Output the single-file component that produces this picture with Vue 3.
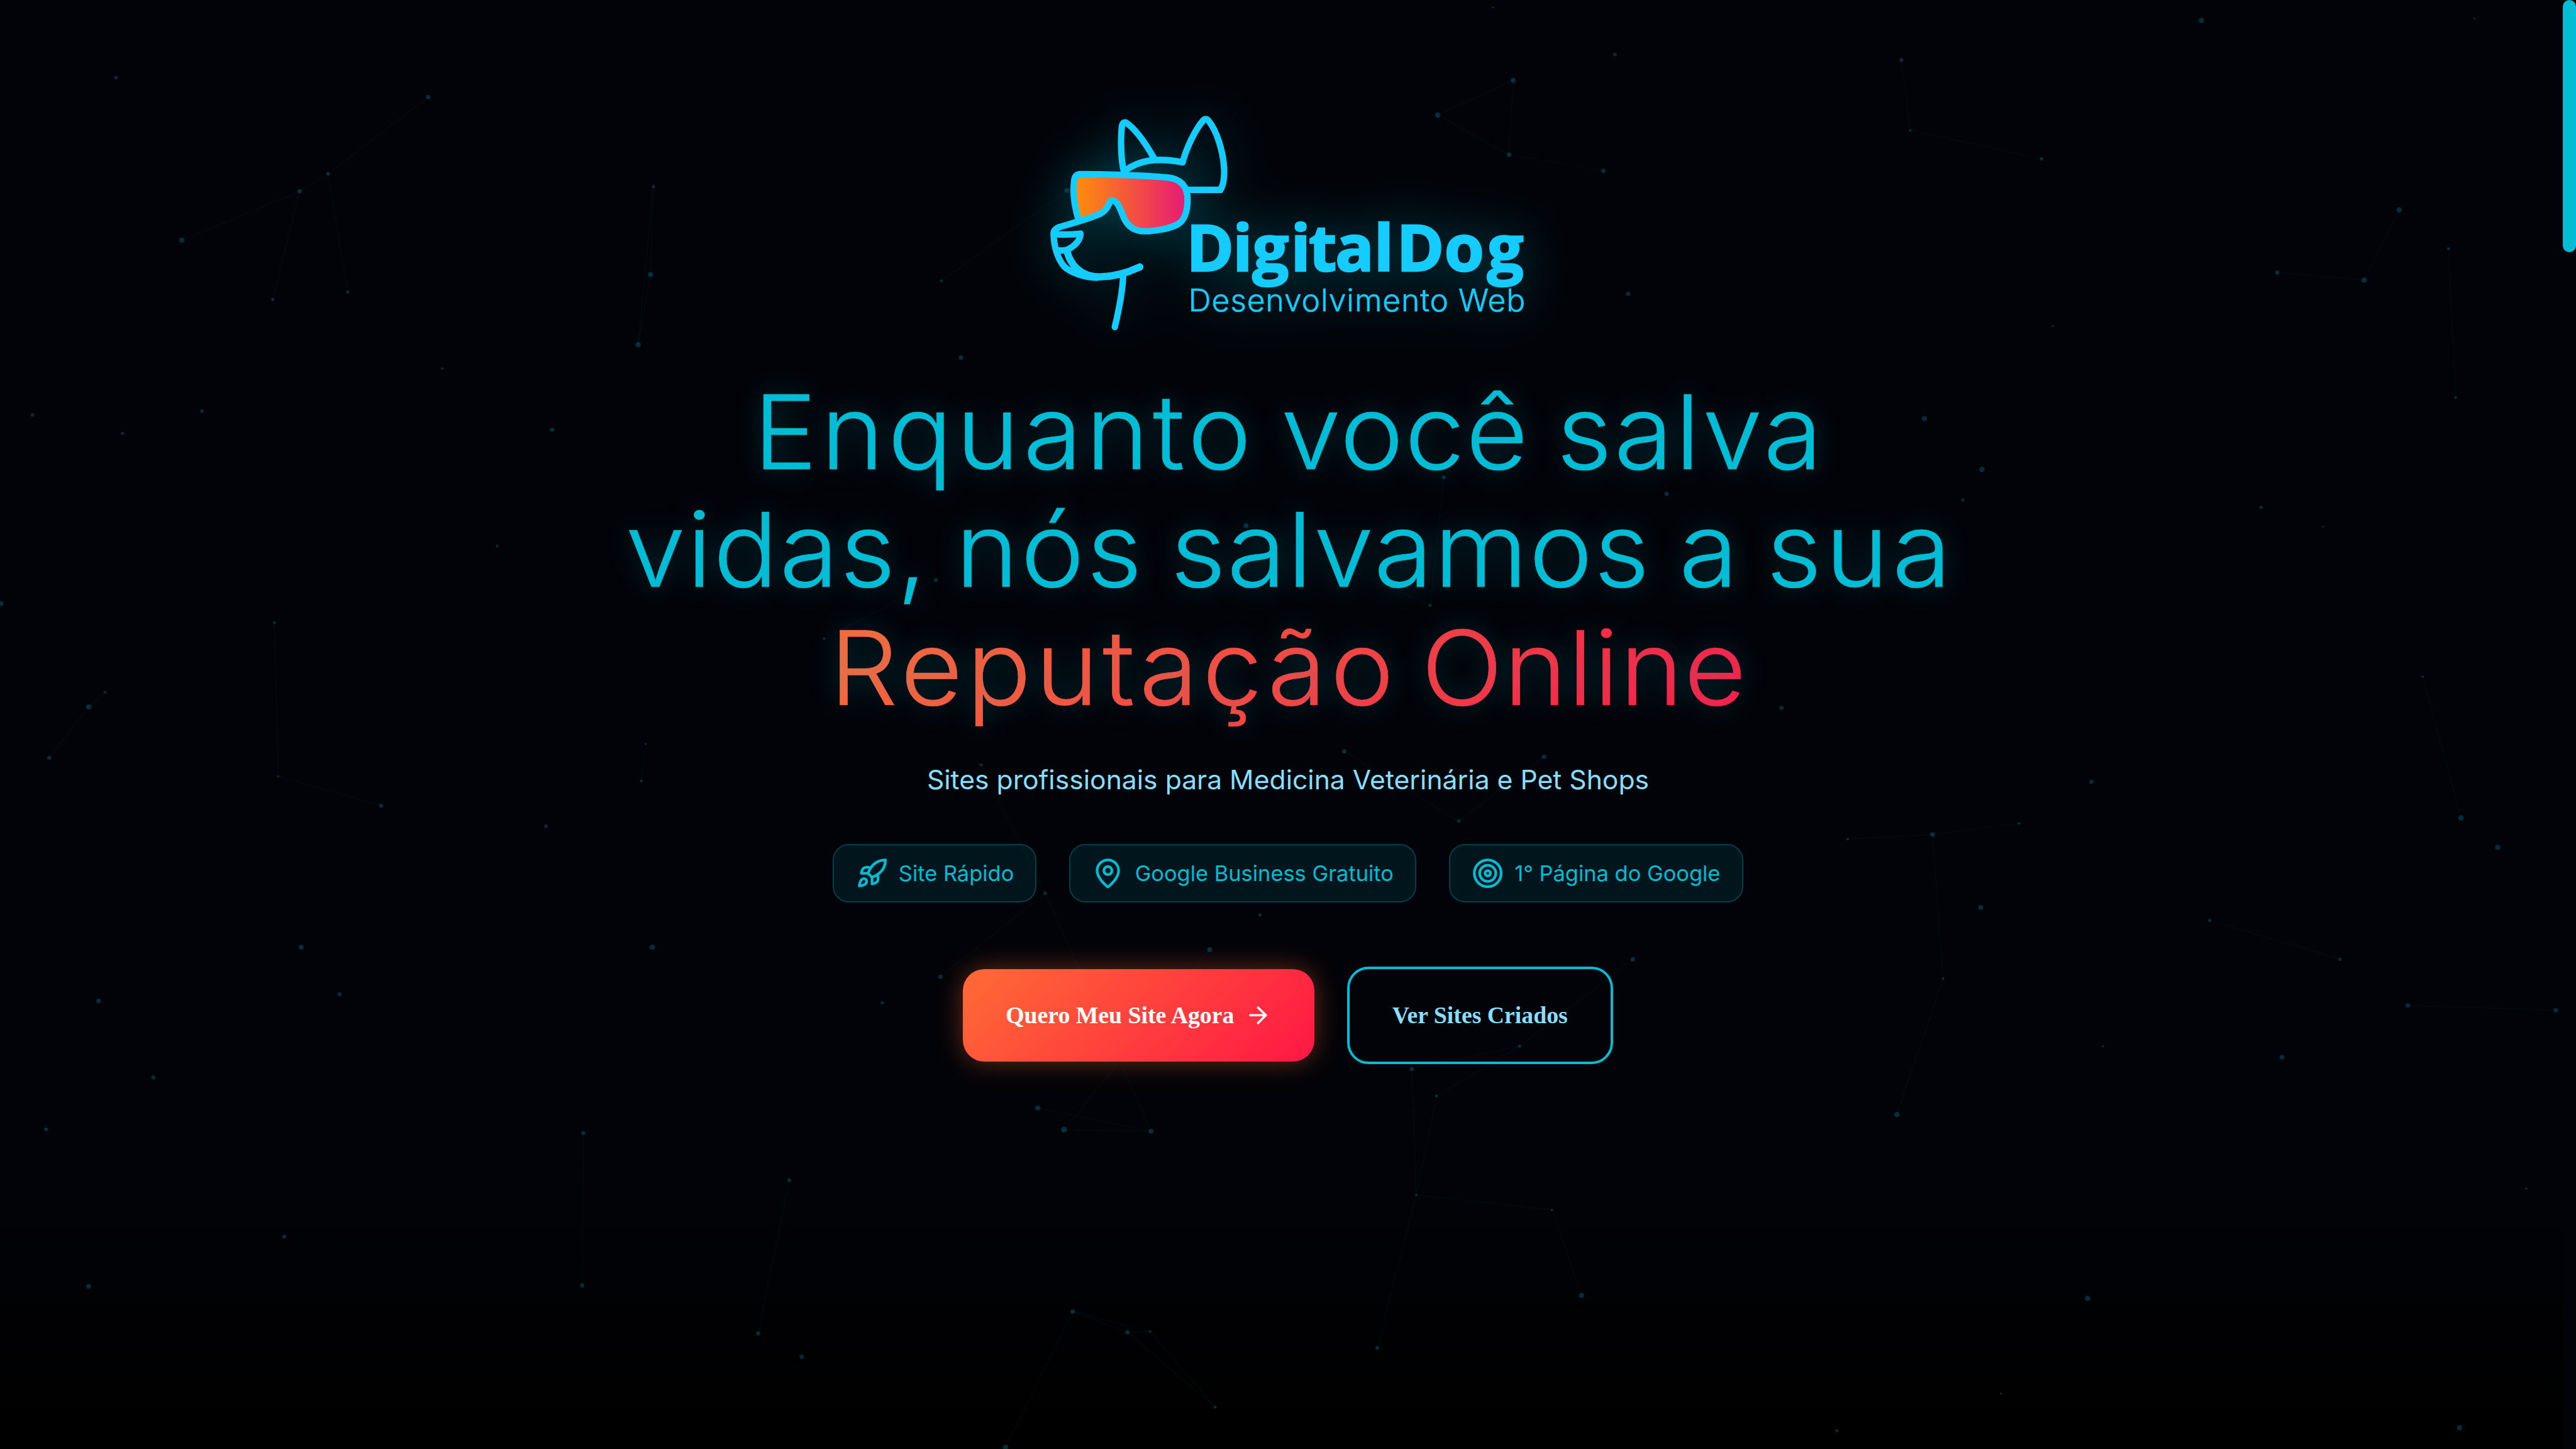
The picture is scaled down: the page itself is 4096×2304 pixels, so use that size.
<script setup>
const lines = [
  {
    indent: 97.7,
    accent: false,
    words: [
      { text: 'Enquanto', gap: 0, spacing: 2.65 },
      { text: 'você', gap: 18.7, spacing: 0.8 },
      { text: 'salva', gap: 19.6, spacing: 1.45 },
    ],
  },
  {
    indent: 6.2,
    accent: false,
    words: [
      { text: 'vidas,', gap: 0, spacing: 1.04 },
      { text: 'nós', gap: 19.1, spacing: 1.6 },
      { text: 'salvamos', gap: 18.7, spacing: 0.86 },
      { text: 'a', gap: 20.4, spacing: 0 },
      { text: 'sua', gap: 20.3, spacing: 2.55 },
    ],
  },
  {
    indent: 152.5,
    accent: true,
    words: [
      { text: 'Reputação', gap: 0, spacing: 2.85 },
      { text: 'Online', gap: 16.7, spacing: 0.66 },
    ],
  },
]

// x, y, radius
const dots = [
  [86.5, 57.9, 1.3], [319.2, 72.3, 1.6], [244.5, 129.5, 1.4], [223.3, 142.6, 1.6], [135.5, 179.1, 2],
  [203.3, 223.2, 1.2], [259.2, 217.7, 1.2], [487, 139.1, 1.2], [484.9, 204.6, 2], [475.6, 256.9, 2],
  [329.8, 274.8, 0.9], [24.1, 309.3, 1.3], [91.4, 323, 1.2], [150.6, 306.5, 1.3], [411.5, 320.3, 1.6],
  [370.6, 407.1, 1], [0.8, 449.8, 1.8], [204.5, 464.2, 1.1], [66.1, 526.9, 2], [78.4, 515.9, 1],
  [36.7, 564.8, 1.5], [207.4, 578.6, 0.8], [284.1, 600.6, 1.5], [407, 615.8, 1.3], [481.3, 554.5, 0.8],
  [478, 582, 1.1], [224.5, 706, 1.8], [486.2, 706, 1.9], [253.1, 741.1, 1.5], [73.5, 746, 1.7],
  [114.3, 803.1, 1.5], [34.3, 841.7, 1.5], [434.7, 844.5, 1.5], [433.9, 958.1, 1.6], [211.9, 921.6, 1.5],
  [66.1, 958.8, 1.8], [588.2, 879.6, 1.4], [565, 993.9, 1.6], [597.6, 1011.2, 1.6], [614.3, 476, 1],
  [1640.8, 15.2, 2], [1844.5, 13.8, 0.8], [1417.2, 44.8, 1.4], [1423.7, 97.1, 1], [1521.7, 118.5, 1.3],
  [1788.2, 156.4, 2], [1825, 185.3, 1.1], [1697.2, 203.2, 1.6], [1762.1, 208.7, 1.9], [1530.2, 243.1, 0.8],
  [1830.3, 296.2, 1], [1434.3, 312, 1.9], [1477.2, 349.9, 2], [1462.9, 372.6, 1.2], [1685.3, 378.2, 1.2],
  [1731.5, 392.6, 0.7], [1805.8, 504.2, 0.9], [1327.8, 527.6, 1.6], [1558.8, 582.7, 1.6], [1834.3, 609.6, 2],
  [1861.7, 631.6, 1.9], [1440.4, 622, 1.7], [1504.9, 613.7, 1], [1377.1, 625.4, 1], [1476.3, 676.4, 1.8],
  [1647, 686, 1.2], [1744.1, 715, 1.2], [1794.7, 749.4, 1.6], [1905, 752.9, 1.6], [1448.2, 729.4, 1],
  [1700.9, 788, 1.8], [1567.4, 779.7, 0.8], [1413.9, 830.7, 2], [1882.9, 885.8, 0.8], [1556, 967.8, 2],
  [1491.4, 1038.7, 0.8], [1369, 1066.3, 1.2], [1833.1, 1064.2, 2], [773.5, 825.8, 1.9], [793.1, 842, 2.2],
  [858, 843.2, 1.8], [1052.3, 796.7, 1.6], [1070.7, 816.9, 1.1], [1132.7, 779.7, 1.2], [1055.5, 890.6, 0.8],
  [1156.8, 901.8, 0.9], [1178.8, 965.5, 1.9], [799.6, 977.5, 1.7], [840.4, 993.1, 1.6], [857.2, 992.5, 1],
  [1026.6, 1004.7, 1.4], [905.7, 1048.7, 1.1], [749.4, 1078.8, 2], [1113, 5.5, 0.8], [1203.7, 40.6, 1.3],
  [1127.8, 59.9, 1.9], [1071.5, 85.8, 2], [1124.8, 115.3, 1.7], [1195.1, 127.4, 1.6], [1213.5, 219, 1.6],
  [701.6, 209.4, 1.1], [716.3, 266.6, 1.7], [795.2, 141.9, 1.8], [1076.1, 355.8, 1.4], [1242.2, 368.2, 1.6],
  [928.7, 391.7, 1.8], [697.6, 432.3, 1.5], [1065.9, 451.2, 1.2], [731.3, 570, 1.2], [1001.9, 560, 1.6],
  [1150.9, 564, 1.7], [1087.3, 612, 1.3], [779, 665.8, 1.3], [939.2, 682, 1.2], [901.7, 707.8, 1.9],
  [701, 728, 1.6], [1217, 715, 1.7], [657.6, 747.4, 1.2],
]

const links = [
  [135.5, 179.1, 223.3, 142.6], [223.3, 142.6, 244.5, 129.5], [244.5, 129.5, 319.2, 72.3],
  [223.3, 142.6, 203.3, 223.2], [244.5, 129.5, 259.2, 217.7], [487, 139.1, 484.9, 204.6],
  [484.9, 204.6, 475.6, 256.9], [487, 139.1, 475.6, 256.9], [36.7, 564.8, 66.1, 526.9],
  [66.1, 526.9, 78.4, 515.9], [204.5, 464.2, 207.4, 578.6], [207.4, 578.6, 284.1, 600.6],
  [434.7, 844.5, 433.9, 958.1], [588.2, 879.6, 565, 993.9], [481.3, 554.5, 478, 582],
  [1417.2, 44.8, 1423.7, 97.1], [1423.7, 97.1, 1521.7, 118.5], [1697.2, 203.2, 1762.1, 208.7],
  [1762.1, 208.7, 1788.2, 156.4], [1825, 185.3, 1830.3, 296.2], [1805.8, 504.2, 1834.3, 609.6],
  [1377.1, 625.4, 1440.4, 622], [1440.4, 622, 1504.9, 613.7], [1440.4, 622, 1448.2, 729.4],
  [1448.2, 729.4, 1413.9, 830.7], [1647, 686, 1744.1, 715], [1794.7, 749.4, 1905, 752.9],
  [1071.5, 85.8, 1127.8, 59.9], [1071.5, 85.8, 1124.8, 115.3], [1127.8, 59.9, 1124.8, 115.3],
  [1124.8, 115.3, 1195.1, 127.4], [795.2, 141.9, 701.6, 209.4], [697.6, 432.3, 614.3, 476],
  [1076.1, 355.8, 1065.9, 451.2], [928.7, 391.7, 1065.9, 451.2], [1001.9, 560, 1087.3, 612],
  [1150.9, 564, 1087.3, 612], [731.3, 570, 779, 665.8], [779, 665.8, 701, 728],
  [773.5, 825.8, 858, 843.2], [793.1, 842, 858, 843.2], [901.7, 707.8, 793.1, 842],
  [779, 665.8, 858, 843.2], [1132.7, 779.7, 1052.3, 796.7], [1132.7, 779.7, 1070.7, 816.9],
  [1217, 715, 1132.7, 779.7], [1052.3, 796.7, 1055.5, 890.6], [1070.7, 816.9, 1055.5, 890.6],
  [1055.5, 890.6, 1156.8, 901.8], [1156.8, 901.8, 1178.8, 965.5], [1055.5, 890.6, 1026.6, 1004.7],
  [799.6, 977.5, 840.4, 993.1], [799.6, 977.5, 857.2, 992.5], [840.4, 993.1, 857.2, 992.5],
  [840.4, 993.1, 905.7, 1048.7], [857.2, 992.5, 905.7, 1048.7], [799.6, 977.5, 749.4, 1078.8],
]
</script>

<template>
  <div class="page">
    <div class="fade"></div>
    <svg class="particles" viewBox="0 0 1920 1080" aria-hidden="true">
      <line v-for="(l, i) in links" :key="'l' + i" :x1="l[0]" :y1="l[1]" :x2="l[2]" :y2="l[3]" />
      <circle v-for="(d, i) in dots" :key="'d' + i" :cx="d[0]" :cy="d[1]" :r="d[2]" />
    </svg>
    <div class="scrollbar"><div class="thumb"></div></div>

    <main class="hero">
      <svg class="logo" viewBox="2349 259 1062 480" role="img">
        <defs>
          <linearGradient id="lens" gradientUnits="userSpaceOnUse" x1="265" y1="0" x2="988" y2="0">
            <stop offset="0" stop-color="#ff8c0c" />
            <stop offset="0.45" stop-color="#f45a38" />
            <stop offset="0.7" stop-color="#f03c54" />
            <stop offset="1" stop-color="#e61c74" />
          </linearGradient>
        </defs>
        <g transform="translate(2320 230) scale(0.33333 0.338)">
          <path
            fill="url(#lens)"
            d="M275 772C245 670 236 590 248 510Q254 473 290 472C420 472 700 478 880 495C960 505 1008 550 1008 640C1008 720 985 780 940 805C890 832 790 850 720 850C650 850 605 815 580 760C555 705 540 645 500 646C480 646 485 700 425 733C370 755 330 765 275 782Z"
          />
          <g class="ink">
            <path d="M581 455C560 380 558 230 568 152Q572 128 592 130C650 165 715 250 780 362" />
            <path d="M590 448C680 385 790 358 975 394C1000 300 1058 180 1112 118Q1130 98 1148 118C1200 180 1245 310 1253 430" />
            <path class="miter" d="M1253 425C1256 490 1250 545 1228 576L1012 576" />
            <path d="M275 770C245 670 236 590 248 510Q254 473 290 472C420 472 700 478 880 495C960 505 1008 550 1008 640C1008 720 985 780 940 805C890 832 790 850 720 850C650 850 605 815 580 760C555 705 540 645 500 646C480 646 485 700 425 733C350 768 225 800 150 822Q108 838 109 870C112 955 138 1035 180 1083C225 1125 320 1157 400 1157" />
            <path d="M118 869C180 874 230 872 290 866C290 915 225 985 150 977" />
            <path class="jaw" d="M200 985C220 1060 280 1153 420 1152C510 1150 610 1122 688 1086" />
            <path d="M576 1145C572 1250 545 1380 520 1484" />
          </g>
        </g>
        <text class="brand" y="606" x="2653 2757 2801 2887 2927 2986 3073 3123 3230 3326">DigitalDog</text>
        <text class="tagline" y="696.4" x="2658">Desenvolvimento Web</text>
      </svg>

      <h1 class="title">
        <span
          v-for="(line, i) in lines"
          :key="i"
          class="line"
          :class="{ accent: line.accent }"
          :style="{ marginLeft: line.indent / 10 + 'rem' }"
        >
          <span
            v-for="w in line.words"
            :key="w.text"
            :style="{ marginLeft: w.gap / 10 + 'rem', letterSpacing: w.spacing / 10 + 'rem' }"
          >{{ w.text }}</span>
        </span>
      </h1>

      <p class="subtitle">Sites profissionais para Medicina Veterinária e Pet Shops</p>

      <ul class="chips">
        <li class="chip">
          <svg class="icon" viewBox="0 0 24 24">
            <path d="M4.5 16.5c-1.5 1.26-2 5-2 5s3.74-.5 5-2c.71-.84.7-2.13-.09-2.91a2.18 2.18 0 0 0-2.91-.09z" />
            <path d="m12 15-3-3a22 22 0 0 1 2-3.95A12.88 12.88 0 0 1 22 2c0 2.72-.78 7.5-6 11a22.35 22.35 0 0 1-4 2z" />
            <path d="M9 12H4s.55-3.03 2-4c1.62-1.08 5 0 5 0" />
            <path d="M12 15v5s3.03-.55 4-2c1.08-1.62 0-5 0-5" />
          </svg>
          <span>Site Rápido</span>
        </li>
        <li class="chip">
          <svg class="icon" viewBox="0 0 24 24">
            <path d="M20 10c0 4.993-5.539 10.193-7.399 11.799a1 1 0 0 1-1.202 0C9.539 20.193 4 14.993 4 10a8 8 0 0 1 16 0" />
            <circle cx="12" cy="10" r="3" />
          </svg>
          <span>Google Business Gratuito</span>
        </li>
        <li class="chip">
          <svg class="icon" viewBox="0 0 24 24">
            <circle cx="12" cy="12" r="10" />
            <circle cx="12" cy="12" r="6" />
            <circle cx="12" cy="12" r="2" />
          </svg>
          <span>1° Página do Google</span>
        </li>
      </ul>

      <div class="actions">
        <button class="btn primary">
          <span>Quero Meu Site Agora</span>
          <svg class="arrow" viewBox="0 0 24 24">
            <path d="M5 12h14" />
            <path d="m12 5 7 7-7 7" />
          </svg>
        </button>
        <button class="btn outline">Ver Sites Criados</button>
      </div>
    </main>
  </div>
</template>

<style>
html {
  font-size: calc(100vw / 192);
}
body {
  margin: 0;
  background: #020308;
}
</style>

<style scoped>
.page {
  position: relative;
  height: 108rem;
  overflow: hidden;
  background: #020308;
  font-family: Inter, sans-serif;
}
.particles {
  position: absolute;
  inset: 0;
  width: 100%;
  height: 100%;
}
.particles circle {
  fill: rgba(0, 188, 212, 0.24);
}
.particles line {
  stroke: rgba(0, 188, 212, 0.035);
  stroke-width: 1;
}
.fade {
  position: absolute;
  left: 0;
  right: 1rem;
  bottom: 0;
  height: 20rem;
  background: linear-gradient(to bottom, rgba(0, 0, 0, 0), #000 90%);
}
.scrollbar {
  position: absolute;
  top: 0;
  right: 0;
  bottom: 0;
  width: 1rem;
  background: #020308;
}
.thumb {
  height: 18.8rem;
  border-radius: 0.5rem;
  background: #00bcd4;
}
.hero {
  position: relative;
  display: flex;
  flex-direction: column;
  align-items: center;
  padding-top: 8.64rem;
}
.logo {
  width: 35.4rem;
  height: 16rem;
  overflow: visible;
  filter: drop-shadow(0 0 2rem rgba(0, 188, 212, 0.4));
}
.ink {
  fill: none;
  stroke: #14ccff;
  stroke-width: 43;
  stroke-linecap: round;
  stroke-linejoin: round;
}
.ink .miter {
  stroke-linejoin: miter;
  stroke-linecap: butt;
}
.ink .jaw {
  stroke-width: 48;
}
.brand {
  fill: #14ccff;
  stroke: #14ccff;
  stroke-width: 3.5;
  font: 700 144px 'Open Sans', sans-serif;
}
.tagline {
  fill: #14ccff;
  stroke: #14ccff;
  stroke-width: 1;
  font: 300 70px Inter, sans-serif;
  letter-spacing: 1.3px;
}
.title {
  width: 100rem;
  margin: 3.14rem 0 0;
  font-weight: 300;
  font-size: 7.7rem;
  line-height: 8.8rem;
  color: #00bcd4;
  text-shadow: 0 0 2rem rgba(0, 188, 212, 0.3);
  -webkit-text-stroke: 0.035rem #00bcd4;
  white-space: nowrap;
  transform: scaleX(1.04);
  transform-origin: 0 0;
}
.line {
  display: flex;
  width: max-content;
}
.accent {
  background: linear-gradient(135deg, #ff6b35, #ff1744);
  -webkit-background-clip: text;
  background-clip: text;
  -webkit-text-fill-color: transparent;
  -webkit-text-stroke-color: transparent;
}
.subtitle {
  margin: 2.33rem 0 0;
  font-size: 2rem;
  line-height: 3.2rem;
  color: #87dfff;
}
.chips {
  display: flex;
  gap: 2.43rem;
  margin: 3.22rem 0 0;
  padding: 0;
  list-style: none;
}
.chip {
  display: flex;
  align-items: center;
  gap: 0.8rem;
  box-sizing: border-box;
  height: 4.34rem;
  padding: 0 1.6rem;
  border: 0.1rem solid rgba(0, 188, 212, 0.25);
  border-radius: 1.2rem;
  background: rgba(0, 188, 212, 0.1);
  color: #00bcd4;
  font-size: 1.613rem;
  white-space: nowrap;
}
.icon,
.arrow {
  fill: none;
  stroke: currentColor;
  stroke-width: 2;
  stroke-linecap: round;
  stroke-linejoin: round;
}
.icon {
  width: 2.4rem;
  height: 2.4rem;
}
.arrow {
  width: 2rem;
  height: 2rem;
}
.actions {
  display: flex;
  align-items: center;
  gap: 2.4rem;
  margin-top: 4.76rem;
}
.btn {
  display: flex;
  align-items: center;
  gap: 0.8rem;
  box-sizing: border-box;
  padding: 0 3.2rem;
  border: 0;
  border-radius: 1.6rem;
  font: bold 1.77rem 'Liberation Serif', serif;
  white-space: nowrap;
}
.primary {
  height: 6.9rem;
  color: #fff;
  background: linear-gradient(135deg, #ff6b35, #ff1744);
  box-shadow: 0 0 2rem rgba(255, 107, 53, 0.4);
}
.outline {
  height: 7.3rem;
  border: 0.2rem solid #00bcd4;
  color: #87dfff;
  background: transparent;
}
</style>
